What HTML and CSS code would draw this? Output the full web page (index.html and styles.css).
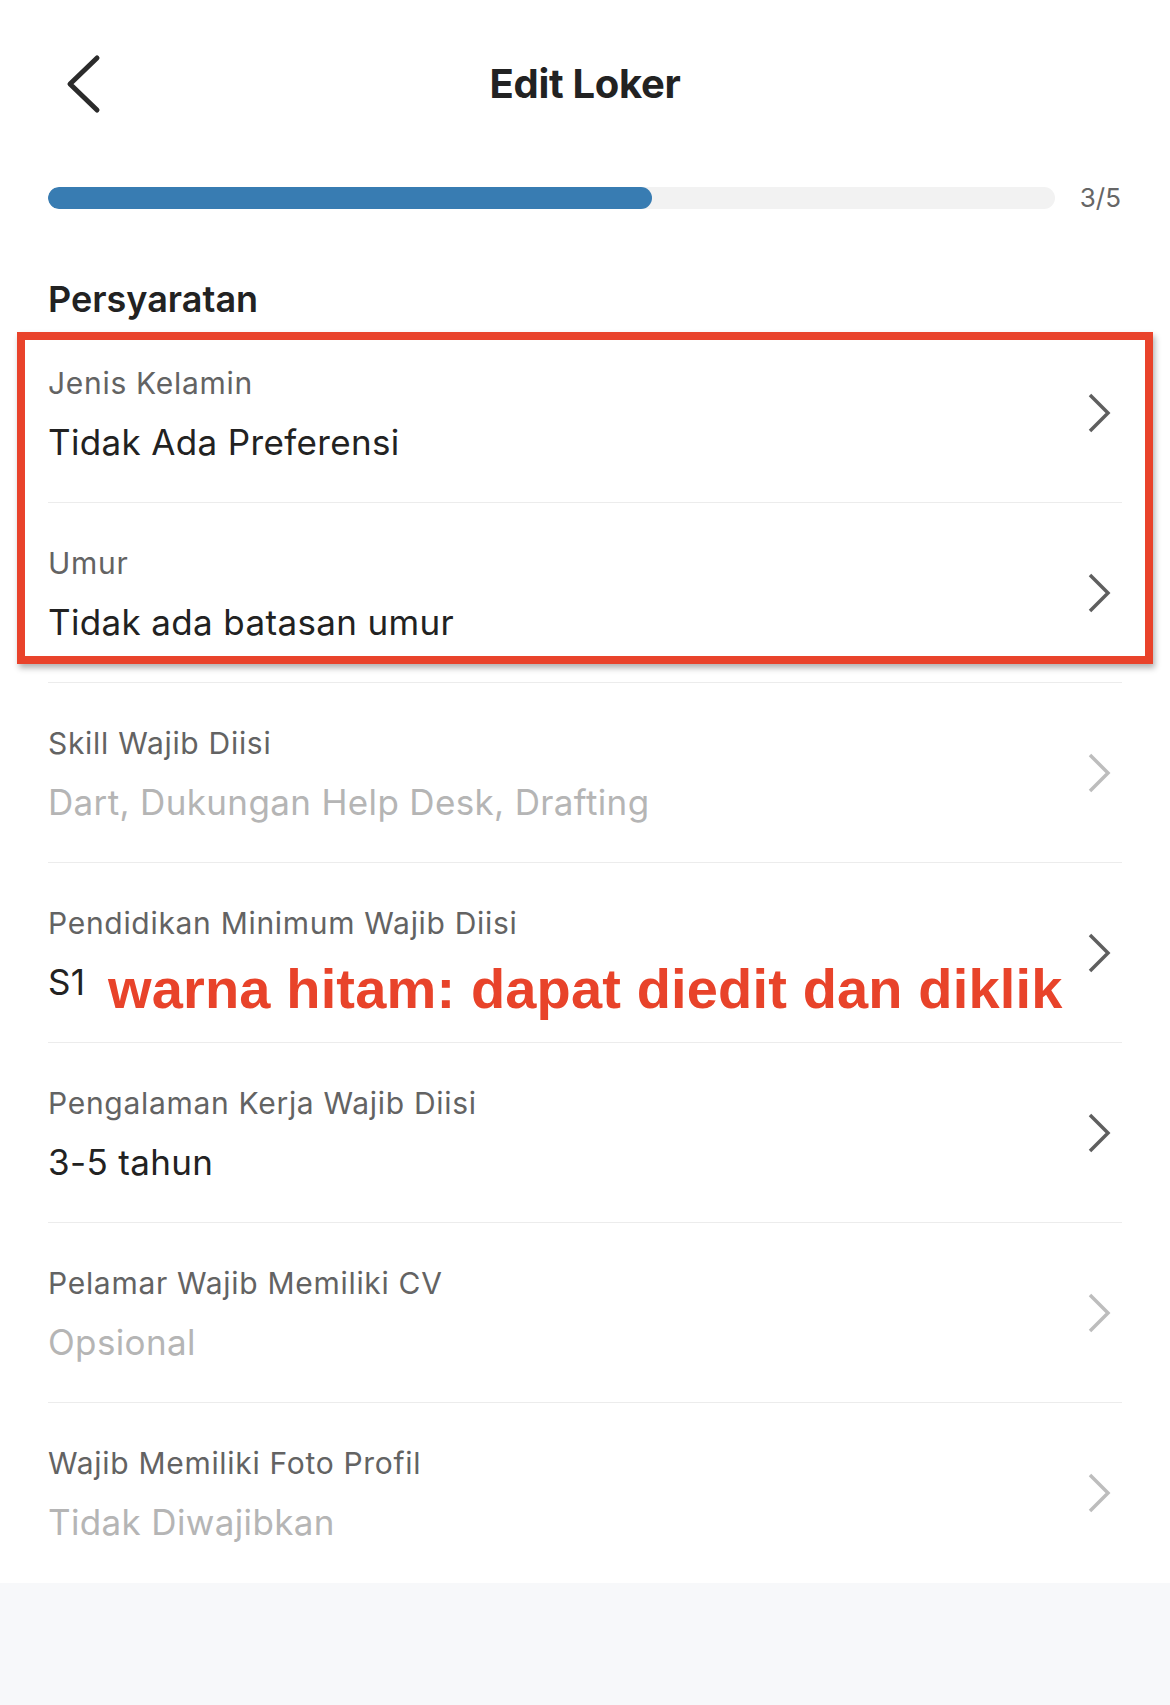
FILE: index.html
```html
<!DOCTYPE html>
<html lang="id">
<head>
<meta charset="utf-8">
<title>Edit Loker</title>
<link rel="stylesheet" href="styles.css">
</head>
<body>
<div class="page">
  <header class="header">
    <svg class="back" width="40" height="60" viewBox="0 0 40 60"><polyline points="33,4 6,30 33,56" fill="none" stroke="#2b2b2b" stroke-width="5" stroke-linecap="round" stroke-linejoin="round"/></svg>
    <h1 class="title">Edit Loker</h1>
    <span></span>
  </header>

  <div class="progress">
    <div class="track"><div class="fill" style="width:60%"></div></div>
    <span class="step">3/5</span>
  </div>

  <h2 class="section">Persyaratan</h2>

  <div class="list">
    <div class="row">
      <div class="text"><div class="label">Jenis Kelamin</div><div class="value">Tidak Ada Preferensi</div></div>
      <svg class="chev" width="26" height="42" viewBox="0 0 26 42"><polyline points="4,3 22,21 4,39" fill="none" stroke="#5f5f5f" stroke-width="3.5"/></svg>
    </div>
    <div class="row">
      <div class="text"><div class="label">Umur</div><div class="value">Tidak ada batasan umur</div></div>
      <svg class="chev" width="26" height="42" viewBox="0 0 26 42"><polyline points="4,3 22,21 4,39" fill="none" stroke="#5f5f5f" stroke-width="3.5"/></svg>
    </div>
    <div class="row">
      <div class="text"><div class="label">Skill Wajib Diisi</div><div class="value muted">Dart, Dukungan Help Desk, Drafting</div></div>
      <svg class="chev" width="26" height="42" viewBox="0 0 26 42"><polyline points="4,3 22,21 4,39" fill="none" stroke="#bdbdbd" stroke-width="3.5"/></svg>
    </div>
    <div class="row">
      <div class="text"><div class="label">Pendidikan Minimum Wajib Diisi</div><div class="value">S1</div></div>
      <svg class="chev" width="26" height="42" viewBox="0 0 26 42"><polyline points="4,3 22,21 4,39" fill="none" stroke="#5f5f5f" stroke-width="3.5"/></svg>
      <div class="note">warna hitam: dapat diedit dan diklik</div>
    </div>
    <div class="row">
      <div class="text"><div class="label">Pengalaman Kerja Wajib Diisi</div><div class="value">3-5 tahun</div></div>
      <svg class="chev" width="26" height="42" viewBox="0 0 26 42"><polyline points="4,3 22,21 4,39" fill="none" stroke="#5f5f5f" stroke-width="3.5"/></svg>
    </div>
    <div class="row">
      <div class="text"><div class="label">Pelamar Wajib Memiliki CV</div><div class="value muted">Opsional</div></div>
      <svg class="chev" width="26" height="42" viewBox="0 0 26 42"><polyline points="4,3 22,21 4,39" fill="none" stroke="#bdbdbd" stroke-width="3.5"/></svg>
    </div>
    <div class="row last">
      <div class="text"><div class="label">Wajib Memiliki Foto Profil</div><div class="value muted">Tidak Diwajibkan</div></div>
      <svg class="chev" width="26" height="42" viewBox="0 0 26 42"><polyline points="4,3 22,21 4,39" fill="none" stroke="#bdbdbd" stroke-width="3.5"/></svg>
    </div>
    <div class="highlight"></div>
  </div>

  <div class="footer"></div>
</div>
</body>
</html>
```

FILE: styles.css
```css
* { box-sizing: border-box; }
html, body { margin: 0; padding: 0; background: #fff; }
body { font-family: Inter, "Noto Sans", "Liberation Sans", sans-serif; color: #222; }

.page {
  min-height: 1705px;
  display: flex;
  flex-direction: column;
}

.header {
  display: grid;
  grid-template-columns: 1fr auto 1fr;
  align-items: center;
  padding: 54px 64px 0 64px;
  height: 114px;
}
.back { display: block; }
.title {
  margin: 0;
  font-size: 40px;
  line-height: 48px;
  font-weight: 700;
  color: #222;
  letter-spacing: -0.3px;
}

.progress {
  display: flex;
  align-items: center;
  gap: 25px;
  margin-top: 73px;
  padding: 0 49px 0 48px;
  height: 22px;
}
.track {
  flex: 1;
  height: 22px;
  border-radius: 11px;
  background: #f2f2f2;
  overflow: hidden;
}
.fill {
  height: 100%;
  border-radius: 11px;
  background: #387cb2;
}
.step {
  font-size: 26px;
  line-height: 22px;
  color: #666;
}

.section {
  margin: 68px 0 2px 48px;
  font-size: 36px;
  line-height: 44px;
  font-weight: 600;
  color: #222;
}

.list { position: relative; }

.row {
  position: relative;
  margin: 0 48px;
  height: 180px;
  border-bottom: 1px solid #ececec;
  display: flex;
  align-items: flex-start;
  justify-content: space-between;
}
.row.last { border-bottom: none; }

.text {
  padding-top: 40px;
  display: flex;
  flex-direction: column;
  gap: 15px;
}
.label {
  font-size: 30px;
  line-height: 40px;
  letter-spacing: 0.7px;
  color: #636363;
}
.value {
  font-size: 35px;
  line-height: 48px;
  letter-spacing: 0.35px;
  color: #222;
}
.value.muted { color: #b5b5b5; }

.chev {
  align-self: center;
  margin-right: 10px;
  display: block;
}

.note {
  position: absolute;
  left: 60px;
  top: 98px;
  font-family: "Liberation Sans", Arial, sans-serif;
  font-weight: 700;
  font-size: 56px;
  line-height: 56px;
  letter-spacing: 0.15px;
  color: #e8432a;
  white-space: nowrap;
}

.highlight {
  position: absolute;
  left: 17px;
  top: 9px;
  width: 1136px;
  height: 332px;
  border: 8px solid #e9432b;
  box-shadow: 2px 4px 6px rgba(0, 0, 0, 0.3);
  pointer-events: none;
}

.footer {
  flex: 1;
  background: #f7f8fa;
}
```
